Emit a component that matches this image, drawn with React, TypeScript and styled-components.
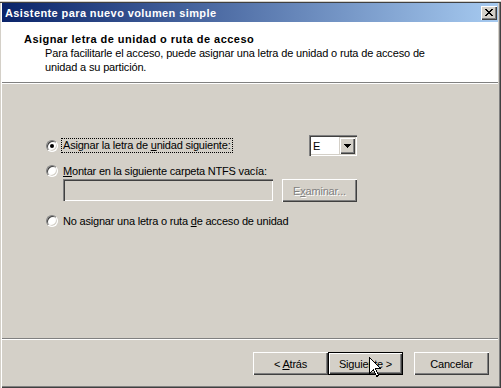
import React from "react";
import styled, { createGlobalStyle } from "styled-components";

const Global = createGlobalStyle`
  html, body { margin: 0; padding: 0; background: #D4D0C8; }
  body { font-family: "Liberation Sans", Arial, sans-serif; font-size: 11px; color: #000; }
  * { box-sizing: border-box; }
`;

const Window = styled.div`
  position: relative;
  width: 501px;
  height: 388px;
  background: #d4d0c8;
  display: flex;
  flex-direction: column;
  padding: 0 3px 2px 2px;
  box-shadow: inset 1px 0 0 #d4d0c8, inset 2px 0 0 #ffffff, inset -1px -1px 0 #404040,
    inset -2px -2px 0 #808080;
`;

const TopStrip = styled.div`
  height: 3px;
  margin: 0 -3px 0 -2px;
  background: #d4d0c8;
  border-top: 1px solid #ffffff;
  border-bottom: 1px solid #404040;
`;

const TitleBar = styled.div`
  height: 19px;
  display: flex;
  align-items: center;
  justify-content: space-between;
  padding: 0 1px 0 3px;
  background: linear-gradient(to right, #0a246a, #a6caf0);
`;

const TitleText = styled.span`
  color: #fff;
  font-weight: bold;
  font-size: 11px;
  letter-spacing: 0.4px;
  line-height: 14px;
`;

const CloseButton = styled.div`
  width: 16px;
  height: 14px;
  background: #d4d0c8;
  display: flex;
  align-items: center;
  justify-content: center;
  box-shadow: inset 1px 1px 0 #ffffff, inset -1px -1px 0 #404040, inset -2px -2px 0 #808080;
`;

const Header = styled.div`
  height: 61px;
  background: #fff;
  padding: 10px 0 0 22px;
  border-bottom: 1px solid #808080;
  box-shadow: 0 1px 0 #ffffff;
  margin-bottom: 1px;
  line-height: 14px;
`;

const HeaderTitle = styled.div`
  font-weight: bold;
  letter-spacing: 0.45px;
`;

const HeaderText = styled.div`
  margin-left: 21px;
  letter-spacing: -0.15px;
`;

const Body = styled.div`
  flex: 1;
  padding: 51px 0 0 44px;
  display: flex;
  flex-direction: column;
  letter-spacing: -0.2px;
`;

const FirstRow = styled.div`
  width: 311px;
  height: 21px;
  display: flex;
  align-items: center;
  justify-content: space-between;
`;

const RadioRow = styled.div<{ $top?: number }>`
  display: flex;
  align-items: center;
  height: 16px;
  margin-top: ${(p) => p.$top ?? 0}px;
`;

const Radio = styled.span<{ $checked?: boolean }>`
  position: relative;
  width: 12px;
  height: 12px;
  border-radius: 50%;
  background: #fff;
  border: 1px solid;
  border-color: #808080 #ffffff #ffffff #808080;
  box-shadow: inset 1px 1px 0 #404040, inset -1px -1px 0 #d4d0c8;
  flex: none;
  &::after {
    content: "";
    display: ${(p) => (p.$checked ? "block" : "none")};
    position: absolute;
    left: 3px;
    top: 3px;
    width: 4px;
    height: 4px;
    border-radius: 50%;
    background: #000;
  }
`;

const Label = styled.span<{ $focus?: boolean }>`
  margin-left: 4px;
  padding: 0 1px;
  line-height: 13px;
  outline: ${(p) => (p.$focus ? "1px dotted #000" : "none")};
  white-space: nowrap;
`;

const Combo = styled.div`
  width: 48px;
  height: 21px;
  background: #fff;
  display: flex;
  align-items: center;
  justify-content: space-between;
  padding: 2px;
  box-shadow: inset 1px 1px 0 #808080, inset 2px 2px 0 #404040, inset -1px -1px 0 #ffffff,
    inset -2px -2px 0 #d4d0c8;
`;

const ComboText = styled.span`
  padding-left: 2px;
  letter-spacing: 0;
`;

const ComboButton = styled.span`
  width: 16px;
  height: 17px;
  background: #d4d0c8;
  display: flex;
  align-items: center;
  justify-content: center;
  box-shadow: inset 1px 1px 0 #d4d0c8, inset 2px 2px 0 #ffffff, inset -1px -1px 0 #404040,
    inset -2px -2px 0 #808080;
`;

const FieldRow = styled.div`
  display: flex;
  margin-left: 17px;
  gap: 9px;
`;

const TextField = styled.div`
  width: 210px;
  height: 22px;
  background: #d4d0c8;
  box-shadow: inset 1px 1px 0 #808080, inset 2px 2px 0 #404040, inset -1px -1px 0 #ffffff,
    inset -2px -2px 0 #d4d0c8;
`;

const Button = styled.div<{ $default?: boolean; $disabled?: boolean }>`
  width: 75px;
  height: 23px;
  display: flex;
  align-items: center;
  justify-content: center;
  background: #d4d0c8;
  letter-spacing: -0.2px;
  white-space: pre;
  color: ${(p) => (p.$disabled ? "#808080" : "#000")};
  text-shadow: ${(p) => (p.$disabled ? "1px 1px 0 #ffffff" : "none")};
  box-shadow: ${(p) =>
    p.$default
      ? "inset 0 0 0 1px #000, inset 1px 1px 0 1px #ffffff, inset -1px -1px 0 1px #404040, inset -2px -2px 0 1px #808080"
      : "inset 1px 1px 0 #ffffff, inset -1px -1px 0 #404040, inset -2px -2px 0 #808080"};
`;

const Footer = styled.div`
  height: 48px;
  border-top: 1px solid #808080;
  box-shadow: inset 0 1px 0 #ffffff;
  display: flex;
  justify-content: flex-end;
  align-items: flex-start;
  padding: 13px 9px 0 0;
`;

const ButtonPair = styled.div`
  display: flex;
  margin-right: 11px;
`;

const Cursor = styled.svg`
  position: absolute;
  left: 369px;
  top: 357px;
`;

export default function App() {
  return (
    <>
      <Global />
      <Window>
        <TopStrip />
        <TitleBar>
          <TitleText>Asistente para nuevo volumen simple</TitleText>
          <CloseButton>
            <svg width="8" height="7" viewBox="0 0 8 7" shapeRendering="crispEdges">
              <path
                d="M0 0h2v1h-2zM6 0h2v1h-2zM1 1h2v1h-2zM5 1h2v1h-2zM2 2h4v1h-4zM3 3h2v1h-2zM2 4h4v1h-4zM1 5h2v1h-2zM5 5h2v1h-2zM0 6h2v1h-2zM6 6h2v1h-2z"
                fill="#000"
              />
            </svg>
          </CloseButton>
        </TitleBar>
        <Header>
          <HeaderTitle>Asignar letra de unidad o ruta de acceso</HeaderTitle>
          <HeaderText>
            Para facilitarle el acceso, puede asignar una letra de unidad o ruta de acceso de
            <br />
            unidad a su partición.
          </HeaderText>
        </Header>
        <Body>
          <FirstRow>
            <RadioRow>
              <Radio $checked />
              <Label $focus>
                Asignar la letra de <u>u</u>nidad siguiente:
              </Label>
            </RadioRow>
            <Combo>
              <ComboText>E</ComboText>
              <ComboButton>
                <svg width="7" height="4" viewBox="0 0 7 4" shapeRendering="crispEdges">
                  <path d="M0 0h7v1h-7zM1 1h5v1h-5zM2 2h3v1h-3zM3 3h1v1h-1z" fill="#000" />
                </svg>
              </ComboButton>
            </Combo>
          </FirstRow>
          <RadioRow $top={7}>
            <Radio />
            <Label>
              <u>M</u>ontar en la siguiente carpeta NTFS vacía:
            </Label>
          </RadioRow>
          <FieldRow>
            <TextField />
            <Button $disabled>
              <span>
                E<u>x</u>aminar...
              </span>
            </Button>
          </FieldRow>
          <RadioRow $top={11}>
            <Radio />
            <Label>
              No asignar una letra o ruta <u>d</u>e acceso de unidad
            </Label>
          </RadioRow>
        </Body>
        <Footer>
          <ButtonPair>
            <Button>
              <span>
                {"< "}
                <u>A</u>trás
              </span>
            </Button>
            <Button $default>
              <span>Siguiente &gt;</span>
            </Button>
          </ButtonPair>
          <Button>
            <span>Cancelar</span>
          </Button>
        </Footer>
        <Cursor width="13" height="21" viewBox="0 0 13 21">
          <path
            d="M0.5 0.5 L0.5 16.5 L4.5 12.5 L7.5 19.5 L9.5 18.5 L6.5 11.5 L11.5 11.5 Z"
            fill="#fff"
            stroke="#000"
            strokeWidth="1"
            shapeRendering="crispEdges"
          />
        </Cursor>
      </Window>
    </>
  );
}
